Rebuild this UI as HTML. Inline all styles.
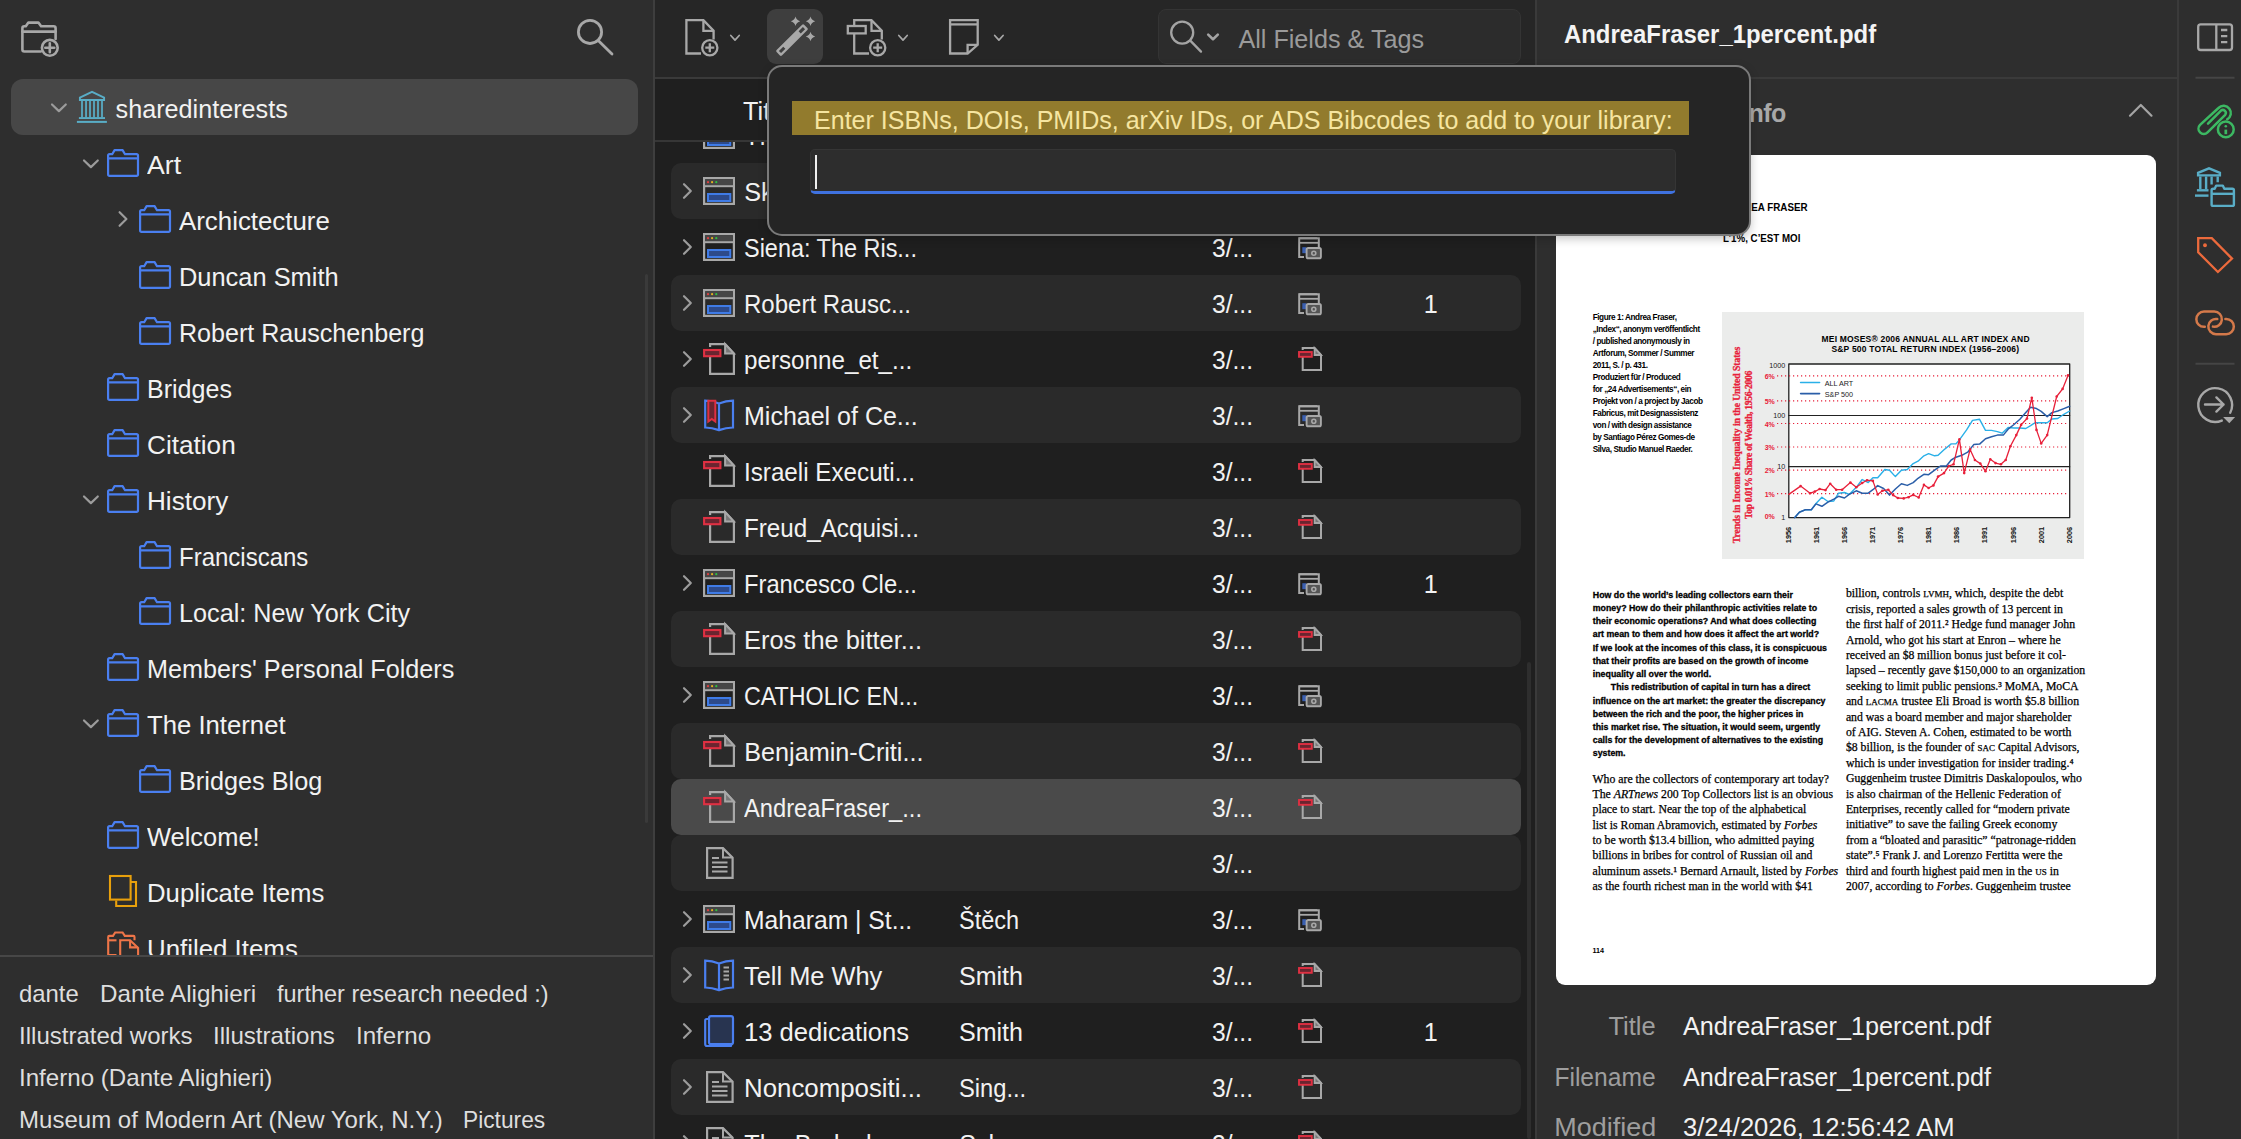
<!DOCTYPE html>
<html><head><meta charset="utf-8"><style>
html,body{margin:0;padding:0;width:2241px;height:1139px;overflow:hidden;background:#1f1f1f;}
body>div,body>svg{position:absolute;}
.t{position:absolute;white-space:nowrap;font-family:'Liberation Sans', sans-serif;}
</style></head><body>
<div style="left:0px;top:0px;width:654px;height:1139px;background:#2e2e2e;border-radius:0px;"></div>
<div style="left:653px;top:0px;width:2px;height:1139px;background:#3e3e3e;border-radius:0px;"></div>
<div style="left:655px;top:0px;width:881px;height:78px;background:#262626;border-radius:0px;"></div>
<div style="left:655px;top:78px;width:881px;height:1061px;background:#1f1f1f;border-radius:0px;"></div>
<div style="left:1537px;top:0px;width:704px;height:1139px;background:#2e2e2e;border-radius:0px;"></div>
<svg style="left:15px;top:15px;" width="50" height="50" viewBox="15 15 50 50" fill="none" stroke-linecap="round" stroke-linejoin="round"><g stroke="#a8a8a8" stroke-width="2.6"><path d="M40.8,51.5 H24.4 Q22.4,51.5 22.4,49.5 V28.3 Q22.4,26.3 24.4,26.3 H25.8 L28.4,22.6 H38.4 L41.1,26.3 H53.6 Q55.6,26.3 55.6,28.3 V39"/><path d="M22.4,31.6 H55.6"/><circle cx="49.8" cy="47.8" r="7.9" fill="#2e2e2e"/><path d="M45.3,47.8 H54.3 M49.8,43.3 V52.3"/></g></svg>
<svg style="left:570px;top:10px;" width="50" height="50" viewBox="570 10 50 50" fill="none" stroke-linecap="round" stroke-linejoin="round"><g stroke="#a8a8a8" stroke-width="2.8"><circle cx="590" cy="31.9" r="11.6"/><path d="M599,41.2 L612,54"/></g></svg>
<div style="left:11px;top:79px;width:627px;height:56px;background:#474747;border-radius:12px;"></div>
<div class="t" style="left:115.6px;top:96.9px;font-size:25.2px;line-height:25.2px;color:#f2f2f2;">sharedinterests</div>
<div class="t" style="left:147.1px;top:152.9px;font-size:25.2px;line-height:25.2px;color:#f2f2f2;transform:scaleX(1.0594);transform-origin:left center;">Art</div>
<div class="t" style="left:179.1px;top:208.9px;font-size:25.2px;line-height:25.2px;color:#f2f2f2;transform:scaleX(1.0260);transform-origin:left center;">Archictecture</div>
<div class="t" style="left:179.1px;top:264.9px;font-size:25.2px;line-height:25.2px;color:#f2f2f2;transform:scaleX(1.0088);transform-origin:left center;">Duncan Smith</div>
<div class="t" style="left:179.1px;top:320.9px;font-size:25.2px;line-height:25.2px;color:#f2f2f2;transform:scaleX(0.9958);transform-origin:left center;">Robert Rauschenberg</div>
<div class="t" style="left:147.1px;top:376.9px;font-size:25.2px;line-height:25.2px;color:#f2f2f2;transform:scaleX(0.9941);transform-origin:left center;">Bridges</div>
<div class="t" style="left:147.1px;top:432.9px;font-size:25.2px;line-height:25.2px;color:#f2f2f2;transform:scaleX(1.0386);transform-origin:left center;">Citation</div>
<div class="t" style="left:147.1px;top:488.9px;font-size:25.2px;line-height:25.2px;color:#f2f2f2;transform:scaleX(1.0373);transform-origin:left center;">History</div>
<div class="t" style="left:179.1px;top:544.9px;font-size:25.2px;line-height:25.2px;color:#f2f2f2;transform:scaleX(0.9523);transform-origin:left center;">Franciscans</div>
<div class="t" style="left:179.1px;top:600.9px;font-size:25.2px;line-height:25.2px;color:#f2f2f2;">Local: New York City</div>
<div class="t" style="left:147.1px;top:656.9px;font-size:25.2px;line-height:25.2px;color:#f2f2f2;">Members' Personal Folders</div>
<div class="t" style="left:147.1px;top:712.9px;font-size:25.2px;line-height:25.2px;color:#f2f2f2;transform:scaleX(1.0204);transform-origin:left center;">The Internet</div>
<div class="t" style="left:179.1px;top:768.9px;font-size:25.2px;line-height:25.2px;color:#f2f2f2;transform:scaleX(1.0034);transform-origin:left center;">Bridges Blog</div>
<div class="t" style="left:147.1px;top:824.9px;font-size:25.2px;line-height:25.2px;color:#f2f2f2;transform:scaleX(1.0097);transform-origin:left center;">Welcome!</div>
<div class="t" style="left:147.1px;top:880.9px;font-size:25.2px;line-height:25.2px;color:#f2f2f2;transform:scaleX(1.0219);transform-origin:left center;">Duplicate Items</div>
<div class="t" style="left:147.1px;top:936.9px;font-size:25.2px;line-height:25.2px;color:#f2f2f2;transform:scaleX(1.0260);transform-origin:left center;">Unfiled Items</div>
<svg style="left:0px;top:79px;" width="653" height="876" viewBox="0 79 653 876" fill="none" stroke-linecap="round" stroke-linejoin="round"><path d="M52.00000000000001,104.5 L58.900000000000006,111.1 L65.80000000000001,104.5" stroke="#9c9c9c" stroke-width="2.2"/><g stroke="#59adc6" stroke-linecap="butt" stroke-linejoin="miter"><path d="M79.9,100 V97.6 L92,91.9 L104.1,97.6 V100 Z" stroke-width="1.9"/><path d="M82,100.5 V117.5 M86.05,100.5 V117.5 M90,100.5 V117.5 M94,100.5 V117.5 M98,100.5 V117.5 M102,100.5 V117.5" stroke-width="1.75"/><path d="M78.9,118.05 H105" stroke-width="1.9"/><path d="M76.9,121.9 H106.9" stroke-width="2"/></g><path d="M84.0,160.5 L90.9,167.1 L97.80000000000001,160.5" stroke="#9c9c9c" stroke-width="2.2"/><g stroke="#4a7ff0" stroke-width="2.2" transform="translate(107,149)"><path d="M2.6,26.9 H29.4 Q31,26.9 31,25.3 V6.6 Q31,5.2 29.4,5.2 H18 L15.6,1.1 H7.6 L5.2,5.2 H2.6 Q1.1,5.2 1.1,6.6 V25.3 Q1.1,26.9 2.6,26.9 Z"/><path d="M1.1,9.4 H31"/></g><path d="M119.6,212.2 L126.39999999999999,219 L119.6,225.8" stroke="#9c9c9c" stroke-width="2.2"/><g stroke="#4a7ff0" stroke-width="2.2" transform="translate(139,205)"><path d="M2.6,26.9 H29.4 Q31,26.9 31,25.3 V6.6 Q31,5.2 29.4,5.2 H18 L15.6,1.1 H7.6 L5.2,5.2 H2.6 Q1.1,5.2 1.1,6.6 V25.3 Q1.1,26.9 2.6,26.9 Z"/><path d="M1.1,9.4 H31"/></g><g stroke="#4a7ff0" stroke-width="2.2" transform="translate(139,261)"><path d="M2.6,26.9 H29.4 Q31,26.9 31,25.3 V6.6 Q31,5.2 29.4,5.2 H18 L15.6,1.1 H7.6 L5.2,5.2 H2.6 Q1.1,5.2 1.1,6.6 V25.3 Q1.1,26.9 2.6,26.9 Z"/><path d="M1.1,9.4 H31"/></g><g stroke="#4a7ff0" stroke-width="2.2" transform="translate(139,317)"><path d="M2.6,26.9 H29.4 Q31,26.9 31,25.3 V6.6 Q31,5.2 29.4,5.2 H18 L15.6,1.1 H7.6 L5.2,5.2 H2.6 Q1.1,5.2 1.1,6.6 V25.3 Q1.1,26.9 2.6,26.9 Z"/><path d="M1.1,9.4 H31"/></g><g stroke="#4a7ff0" stroke-width="2.2" transform="translate(107,373)"><path d="M2.6,26.9 H29.4 Q31,26.9 31,25.3 V6.6 Q31,5.2 29.4,5.2 H18 L15.6,1.1 H7.6 L5.2,5.2 H2.6 Q1.1,5.2 1.1,6.6 V25.3 Q1.1,26.9 2.6,26.9 Z"/><path d="M1.1,9.4 H31"/></g><g stroke="#4a7ff0" stroke-width="2.2" transform="translate(107,429)"><path d="M2.6,26.9 H29.4 Q31,26.9 31,25.3 V6.6 Q31,5.2 29.4,5.2 H18 L15.6,1.1 H7.6 L5.2,5.2 H2.6 Q1.1,5.2 1.1,6.6 V25.3 Q1.1,26.9 2.6,26.9 Z"/><path d="M1.1,9.4 H31"/></g><path d="M84.0,496.5 L90.9,503.1 L97.80000000000001,496.5" stroke="#9c9c9c" stroke-width="2.2"/><g stroke="#4a7ff0" stroke-width="2.2" transform="translate(107,485)"><path d="M2.6,26.9 H29.4 Q31,26.9 31,25.3 V6.6 Q31,5.2 29.4,5.2 H18 L15.6,1.1 H7.6 L5.2,5.2 H2.6 Q1.1,5.2 1.1,6.6 V25.3 Q1.1,26.9 2.6,26.9 Z"/><path d="M1.1,9.4 H31"/></g><g stroke="#4a7ff0" stroke-width="2.2" transform="translate(139,541)"><path d="M2.6,26.9 H29.4 Q31,26.9 31,25.3 V6.6 Q31,5.2 29.4,5.2 H18 L15.6,1.1 H7.6 L5.2,5.2 H2.6 Q1.1,5.2 1.1,6.6 V25.3 Q1.1,26.9 2.6,26.9 Z"/><path d="M1.1,9.4 H31"/></g><g stroke="#4a7ff0" stroke-width="2.2" transform="translate(139,597)"><path d="M2.6,26.9 H29.4 Q31,26.9 31,25.3 V6.6 Q31,5.2 29.4,5.2 H18 L15.6,1.1 H7.6 L5.2,5.2 H2.6 Q1.1,5.2 1.1,6.6 V25.3 Q1.1,26.9 2.6,26.9 Z"/><path d="M1.1,9.4 H31"/></g><g stroke="#4a7ff0" stroke-width="2.2" transform="translate(107,653)"><path d="M2.6,26.9 H29.4 Q31,26.9 31,25.3 V6.6 Q31,5.2 29.4,5.2 H18 L15.6,1.1 H7.6 L5.2,5.2 H2.6 Q1.1,5.2 1.1,6.6 V25.3 Q1.1,26.9 2.6,26.9 Z"/><path d="M1.1,9.4 H31"/></g><path d="M84.0,720.5 L90.9,727.1 L97.80000000000001,720.5" stroke="#9c9c9c" stroke-width="2.2"/><g stroke="#4a7ff0" stroke-width="2.2" transform="translate(107,709)"><path d="M2.6,26.9 H29.4 Q31,26.9 31,25.3 V6.6 Q31,5.2 29.4,5.2 H18 L15.6,1.1 H7.6 L5.2,5.2 H2.6 Q1.1,5.2 1.1,6.6 V25.3 Q1.1,26.9 2.6,26.9 Z"/><path d="M1.1,9.4 H31"/></g><g stroke="#4a7ff0" stroke-width="2.2" transform="translate(139,765)"><path d="M2.6,26.9 H29.4 Q31,26.9 31,25.3 V6.6 Q31,5.2 29.4,5.2 H18 L15.6,1.1 H7.6 L5.2,5.2 H2.6 Q1.1,5.2 1.1,6.6 V25.3 Q1.1,26.9 2.6,26.9 Z"/><path d="M1.1,9.4 H31"/></g><g stroke="#4a7ff0" stroke-width="2.2" transform="translate(107,821)"><path d="M2.6,26.9 H29.4 Q31,26.9 31,25.3 V6.6 Q31,5.2 29.4,5.2 H18 L15.6,1.1 H7.6 L5.2,5.2 H2.6 Q1.1,5.2 1.1,6.6 V25.3 Q1.1,26.9 2.6,26.9 Z"/><path d="M1.1,9.4 H31"/></g><g stroke="#e8a00c" stroke-width="2.1" stroke-linecap="butt" stroke-linejoin="miter"><rect x="110" y="876" width="20.6" height="23.6"/><path d="M130.6,882 H136 V906 H116.2 V900.5"/></g><g stroke="#ee7548" stroke-width="2.1" stroke-linecap="butt" stroke-linejoin="miter"><path d="M116.5,955 H108.2 V937 Q108.2,935.9 109.3,935.9 H113 L115.2,932.5 H122.6 L124.8,935.9 H133.4 Q134.5,935.9 134.5,937 V940.3"/><path d="M108.2,940.3 H116.5"/><path d="M120.2,956 V940.3 H130.1 L138.1,948 V956"/><path d="M130.1,940.3 V947.4 H138.1"/></g></svg>
<div style="left:0px;top:955px;width:653px;height:184px;background:#2e2e2e;border-radius:0px;"></div>
<div style="left:0px;top:955px;width:653px;height:2px;background:#474747;border-radius:0px;"></div>
<div style="left:644.5px;top:274px;width:3px;height:549px;background:#3a3a3a;border-radius:2px;"></div>
<div class="t" style="left:19.1px;top:981.6px;font-size:24px;line-height:24px;color:#dedede;transform:scaleX(0.9956);transform-origin:left center;">dante</div>
<div class="t" style="left:99.6px;top:981.6px;font-size:24px;line-height:24px;color:#dedede;transform:scaleX(1.0086);transform-origin:left center;">Dante Alighieri</div>
<div class="t" style="left:276.9px;top:981.6px;font-size:24px;line-height:24px;color:#dedede;transform:scaleX(0.9787);transform-origin:left center;">further research needed :)</div>
<div class="t" style="left:19.1px;top:1023.5px;font-size:24px;line-height:24px;color:#dedede;">Illustrated works</div>
<div class="t" style="left:213px;top:1023.5px;font-size:24px;line-height:24px;color:#dedede;transform:scaleX(1.0042);transform-origin:left center;">Illustrations</div>
<div class="t" style="left:355.5px;top:1023.5px;font-size:24px;line-height:24px;color:#dedede;transform:scaleX(1.0051);transform-origin:left center;">Inferno</div>
<div class="t" style="left:19.1px;top:1065.5px;font-size:24px;line-height:24px;color:#dedede;transform:scaleX(1.0050);transform-origin:left center;">Inferno (Dante Alighieri)</div>
<div class="t" style="left:19.1px;top:1107.9px;font-size:24px;line-height:24px;color:#dedede;">Museum of Modern Art (New York, N.Y.)</div>
<div class="t" style="left:463.3px;top:1107.9px;font-size:24px;line-height:24px;color:#dedede;transform:scaleX(0.9481);transform-origin:left center;">Pictures</div>
<div style="left:655px;top:77px;width:881px;height:2px;background:#3a3a3a;border-radius:0px;"></div>
<svg style="left:655px;top:0px;" width="500" height="77" viewBox="655 0 500 77" fill="none" stroke-linecap="round" stroke-linejoin="round"><g stroke="#a8a8a8" stroke-width="2.3" stroke-linecap="butt" stroke-linejoin="miter"><path d="M701,53.5 H686.4 V20.1 H703.4 L713.6,30.8 V39.5"/><path d="M703.4,20.1 V30.8 H713.6"/><circle cx="709.8" cy="47.7" r="7.6" fill="#262626"/><path d="M705.3,47.7 H714.3 M709.8,43.2 V52.2"/></g><path d="M730.8,35.5 L735.0,40.1 L739.1999999999999,35.5" stroke="#a8a8a8" stroke-width="1.7"/><path d="M898.8,35.5 L903.0,40.1 L907.1999999999999,35.5" stroke="#a8a8a8" stroke-width="1.7"/><path d="M994.7,35.5 L998.9000000000001,40.1 L1003.1,35.5" stroke="#a8a8a8" stroke-width="1.7"/><g stroke="#a8a8a8" stroke-width="2.3" stroke-linecap="butt" stroke-linejoin="miter"><path d="M869,53.5 H854.2 V33.5 M854.2,25.9 V20.1 H871.5 L881.8,30.8 V39.5"/><path d="M871.5,20.1 V30.8 H881.8"/><rect x="847.8" y="26" width="17.9" height="7.4"/><circle cx="877.7" cy="47.7" r="7.6" fill="#262626"/><path d="M873.2,47.7 H882.2 M877.7,43.2 V52.2"/></g><g stroke="#a8a8a8" stroke-width="2.3" stroke-linecap="butt" stroke-linejoin="miter"><path d="M967.6,53.5 H950.1 V20.1 H977.7 V44.8 Z"/><path d="M950.1,24.4 H977.7"/><path d="M967.6,53.5 V44.8 H977.7"/></g></svg>
<div style="left:767px;top:9px;width:56px;height:55px;background:#3e3e3e;border-radius:9px;"></div>
<svg style="left:767px;top:9px;" width="56" height="55" viewBox="767 9 56 55" fill="none" stroke-linecap="round" stroke-linejoin="round"><g><path d="M777.6,51.1 L780.9,54.4 L806.4,29 L803.1,25.7 Z" fill="#a8a8a8" stroke="#a8a8a8" stroke-width="2.8" stroke-linejoin="round"/><path d="M780,52 L784.3,47.7 M799.7,32.4 L804,28.1" stroke="#3e3e3e" stroke-width="3" stroke-linecap="butt"/><path d="M795.5,16.6 Q796.44,20.36 800.2,21.3 Q796.44,22.240000000000002 795.5,26.0 Q794.56,22.240000000000002 790.8,21.3 Q794.56,20.36 795.5,16.6 Z" fill="#a8a8a8" stroke="none"/><path d="M810.5,16.6 Q811.44,20.36 815.2,21.3 Q811.44,22.240000000000002 810.5,26.0 Q809.56,22.240000000000002 805.8,21.3 Q809.56,20.36 810.5,16.6 Z" fill="#a8a8a8" stroke="none"/><path d="M810.5,31.8 Q811.44,35.56 815.2,36.5 Q811.44,37.44 810.5,41.2 Q809.56,37.44 805.8,36.5 Q809.56,35.56 810.5,31.8 Z" fill="#a8a8a8" stroke="none"/></g></svg>
<div style="left:1158px;top:9px;width:363px;height:55px;background:#2c2c2c;border-radius:8px;box-sizing:border-box;border:1px solid #343434;"></div>
<svg style="left:1160px;top:10px;" width="70" height="50" viewBox="1160 10 70 50" fill="none" stroke-linecap="round" stroke-linejoin="round"><g stroke="#a4a4a4" stroke-width="2.3"><circle cx="1182.2" cy="32.6" r="11"/><path d="M1190.3,40.6 L1201,51.6"/><path d="M1208.2,34.6 L1213,39.2 L1217.8,34.6" stroke-width="2.6"/></g></svg>
<div class="t" style="left:1238.4px;top:26.9px;font-size:25.2px;line-height:25.2px;color:#9a9a9a;">All Fields &amp; Tags</div>
<div class="t" style="left:744.3px;top:124.3px;font-size:25.2px;line-height:25.2px;color:#f2f2f2;">The Bodleian...</div>
<div class="t" style="left:1211.5px;top:124.3px;font-size:25.2px;line-height:25.2px;color:#f2f2f2;transform:scaleX(0.9762);transform-origin:left center;">3/...</div>
<div style="left:671px;top:163px;width:850px;height:56px;background:#2a2a2a;border-radius:10px;"></div>
<div class="t" style="left:744.3px;top:180.3px;font-size:25.2px;line-height:25.2px;color:#f2f2f2;">Skira...</div>
<div class="t" style="left:1211.5px;top:180.3px;font-size:25.2px;line-height:25.2px;color:#f2f2f2;transform:scaleX(0.9762);transform-origin:left center;">3/...</div>
<div class="t" style="left:744.3px;top:236.3px;font-size:25.2px;line-height:25.2px;color:#f2f2f2;transform:scaleX(0.9309);transform-origin:left center;">Siena: The Ris...</div>
<div class="t" style="left:1211.5px;top:236.3px;font-size:25.2px;line-height:25.2px;color:#f2f2f2;transform:scaleX(0.9762);transform-origin:left center;">3/...</div>
<div style="left:671px;top:275px;width:850px;height:56px;background:#2a2a2a;border-radius:10px;"></div>
<div class="t" style="left:744.3px;top:292.3px;font-size:25.2px;line-height:25.2px;color:#f2f2f2;transform:scaleX(0.9544);transform-origin:left center;">Robert Rausc...</div>
<div class="t" style="left:1211.5px;top:292.3px;font-size:25.2px;line-height:25.2px;color:#f2f2f2;transform:scaleX(0.9762);transform-origin:left center;">3/...</div>
<div class="t" style="left:1423.8px;top:292.3px;font-size:25.2px;line-height:25.2px;color:#f2f2f2;">1</div>
<div class="t" style="left:744.3px;top:348.3px;font-size:25.2px;line-height:25.2px;color:#f2f2f2;transform:scaleX(0.9609);transform-origin:left center;">personne_et_...</div>
<div class="t" style="left:1211.5px;top:348.3px;font-size:25.2px;line-height:25.2px;color:#f2f2f2;transform:scaleX(0.9762);transform-origin:left center;">3/...</div>
<div style="left:671px;top:387px;width:850px;height:56px;background:#2a2a2a;border-radius:10px;"></div>
<div class="t" style="left:744.3px;top:404.3px;font-size:25.2px;line-height:25.2px;color:#f2f2f2;transform:scaleX(0.9927);transform-origin:left center;">Michael of Ce...</div>
<div class="t" style="left:1211.5px;top:404.3px;font-size:25.2px;line-height:25.2px;color:#f2f2f2;transform:scaleX(0.9762);transform-origin:left center;">3/...</div>
<div class="t" style="left:744.3px;top:460.3px;font-size:25.2px;line-height:25.2px;color:#f2f2f2;transform:scaleX(0.9613);transform-origin:left center;">Israeli Executi...</div>
<div class="t" style="left:1211.5px;top:460.3px;font-size:25.2px;line-height:25.2px;color:#f2f2f2;transform:scaleX(0.9762);transform-origin:left center;">3/...</div>
<div style="left:671px;top:499px;width:850px;height:56px;background:#2a2a2a;border-radius:10px;"></div>
<div class="t" style="left:744.3px;top:516.3px;font-size:25.2px;line-height:25.2px;color:#f2f2f2;transform:scaleX(0.9610);transform-origin:left center;">Freud_Acquisi...</div>
<div class="t" style="left:1211.5px;top:516.3px;font-size:25.2px;line-height:25.2px;color:#f2f2f2;transform:scaleX(0.9762);transform-origin:left center;">3/...</div>
<div class="t" style="left:744.3px;top:572.3px;font-size:25.2px;line-height:25.2px;color:#f2f2f2;transform:scaleX(0.9429);transform-origin:left center;">Francesco Cle...</div>
<div class="t" style="left:1211.5px;top:572.3px;font-size:25.2px;line-height:25.2px;color:#f2f2f2;transform:scaleX(0.9762);transform-origin:left center;">3/...</div>
<div class="t" style="left:1423.8px;top:572.3px;font-size:25.2px;line-height:25.2px;color:#f2f2f2;">1</div>
<div style="left:671px;top:611px;width:850px;height:56px;background:#2a2a2a;border-radius:10px;"></div>
<div class="t" style="left:744.3px;top:628.3px;font-size:25.2px;line-height:25.2px;color:#f2f2f2;transform:scaleX(1.0090);transform-origin:left center;">Eros the bitter...</div>
<div class="t" style="left:1211.5px;top:628.3px;font-size:25.2px;line-height:25.2px;color:#f2f2f2;transform:scaleX(0.9762);transform-origin:left center;">3/...</div>
<div class="t" style="left:744.3px;top:684.3px;font-size:25.2px;line-height:25.2px;color:#f2f2f2;transform:scaleX(0.9238);transform-origin:left center;">CATHOLIC EN...</div>
<div class="t" style="left:1211.5px;top:684.3px;font-size:25.2px;line-height:25.2px;color:#f2f2f2;transform:scaleX(0.9762);transform-origin:left center;">3/...</div>
<div style="left:671px;top:723px;width:850px;height:56px;background:#2a2a2a;border-radius:10px;"></div>
<div class="t" style="left:744.3px;top:740.3px;font-size:25.2px;line-height:25.2px;color:#f2f2f2;">Benjamin-Criti...</div>
<div class="t" style="left:1211.5px;top:740.3px;font-size:25.2px;line-height:25.2px;color:#f2f2f2;transform:scaleX(0.9762);transform-origin:left center;">3/...</div>
<div style="left:671px;top:779px;width:850px;height:56px;background:#4a4a4a;border-radius:10px;"></div>
<div class="t" style="left:744.3px;top:796.3px;font-size:25.2px;line-height:25.2px;color:#f2f2f2;transform:scaleX(0.9418);transform-origin:left center;">AndreaFraser_...</div>
<div class="t" style="left:1211.5px;top:796.3px;font-size:25.2px;line-height:25.2px;color:#f2f2f2;transform:scaleX(0.9762);transform-origin:left center;">3/...</div>
<div style="left:671px;top:835px;width:850px;height:56px;background:#2a2a2a;border-radius:10px;"></div>
<div class="t" style="left:1211.5px;top:852.3px;font-size:25.2px;line-height:25.2px;color:#f2f2f2;transform:scaleX(0.9762);transform-origin:left center;">3/...</div>
<div class="t" style="left:744.3px;top:908.3px;font-size:25.2px;line-height:25.2px;color:#f2f2f2;transform:scaleX(0.9795);transform-origin:left center;">Maharam | St...</div>
<div class="t" style="left:959.2px;top:908.3px;font-size:25.2px;line-height:25.2px;color:#f2f2f2;transform:scaleX(0.9329);transform-origin:left center;">&#352;t&#283;ch</div>
<div class="t" style="left:1211.5px;top:908.3px;font-size:25.2px;line-height:25.2px;color:#f2f2f2;transform:scaleX(0.9762);transform-origin:left center;">3/...</div>
<div style="left:671px;top:947px;width:850px;height:56px;background:#2a2a2a;border-radius:10px;"></div>
<div class="t" style="left:744.3px;top:964.3px;font-size:25.2px;line-height:25.2px;color:#f2f2f2;transform:scaleX(1.0083);transform-origin:left center;">Tell Me Why</div>
<div class="t" style="left:959.2px;top:964.3px;font-size:25.2px;line-height:25.2px;color:#f2f2f2;transform:scaleX(0.9939);transform-origin:left center;">Smith</div>
<div class="t" style="left:1211.5px;top:964.3px;font-size:25.2px;line-height:25.2px;color:#f2f2f2;transform:scaleX(0.9762);transform-origin:left center;">3/...</div>
<div class="t" style="left:744.3px;top:1020.3px;font-size:25.2px;line-height:25.2px;color:#f2f2f2;transform:scaleX(1.0163);transform-origin:left center;">13 dedications</div>
<div class="t" style="left:959.2px;top:1020.3px;font-size:25.2px;line-height:25.2px;color:#f2f2f2;transform:scaleX(0.9939);transform-origin:left center;">Smith</div>
<div class="t" style="left:1211.5px;top:1020.3px;font-size:25.2px;line-height:25.2px;color:#f2f2f2;transform:scaleX(0.9762);transform-origin:left center;">3/...</div>
<div class="t" style="left:1423.8px;top:1020.3px;font-size:25.2px;line-height:25.2px;color:#f2f2f2;">1</div>
<div style="left:671px;top:1059px;width:850px;height:56px;background:#2a2a2a;border-radius:10px;"></div>
<div class="t" style="left:744.3px;top:1076.3px;font-size:25.2px;line-height:25.2px;color:#f2f2f2;transform:scaleX(1.0254);transform-origin:left center;">Noncompositi...</div>
<div class="t" style="left:959.2px;top:1076.3px;font-size:25.2px;line-height:25.2px;color:#f2f2f2;transform:scaleX(0.9411);transform-origin:left center;">Sing...</div>
<div class="t" style="left:1211.5px;top:1076.3px;font-size:25.2px;line-height:25.2px;color:#f2f2f2;transform:scaleX(0.9762);transform-origin:left center;">3/...</div>
<div class="t" style="left:744.3px;top:1132.3px;font-size:25.2px;line-height:25.2px;color:#f2f2f2;">The Bodyoka...</div>
<div class="t" style="left:959.2px;top:1132.3px;font-size:25.2px;line-height:25.2px;color:#f2f2f2;">Sch...</div>
<div class="t" style="left:1211.5px;top:1132.3px;font-size:25.2px;line-height:25.2px;color:#f2f2f2;transform:scaleX(0.9762);transform-origin:left center;">3/...</div>
<svg style="left:655px;top:79px;" width="881" height="1060" viewBox="655 79 881 1060" fill="none" stroke-linecap="round" stroke-linejoin="round"><g transform="translate(703,121)" stroke-linecap="butt" stroke-linejoin="miter"><rect x="1.1" y="1.1" width="29.8" height="25.8" stroke="#a8a8a8" stroke-width="2.2"/><rect x="2.2" y="2.2" width="27.6" height="6.4" fill="#464646"/><path d="M1.1,9.2 H30.9" stroke="#a8a8a8" stroke-width="2"/><circle cx="5" cy="5.2" r="1.1" fill="#e04040"/><circle cx="9.1" cy="5.2" r="1.1" fill="#e0b020"/><circle cx="13.3" cy="5.2" r="1.1" fill="#30c040"/><rect x="5" y="17" width="22.3" height="7" fill="#2d4a8a" stroke="#3f7be6" stroke-width="2"/></g><g transform="translate(1298,125)" stroke-linecap="butt" stroke-linejoin="miter"><path d="M19.2,1.2 H1.2 V20 H6" stroke="#a8a8a8" stroke-width="2"/><path d="M1.2,1.2 H20.8 V12" stroke="#a8a8a8" stroke-width="2"/><path d="M1.2,5.8 H20.8" stroke="#a8a8a8" stroke-width="1.8"/><rect x="4.3" y="10.2" width="4" height="6" fill="#3a5fb0"/><rect x="8.6" y="11" width="14.3" height="10.3" rx="1.6" fill="#555" stroke="#a8a8a8" stroke-width="1.9"/><circle cx="15.8" cy="16.2" r="2" stroke="#a8a8a8" stroke-width="1.6"/></g><path d="M684,184.2 L690.8,191 L684,197.8" stroke="#9c9c9c" stroke-width="2.2"/><g transform="translate(703,177)" stroke-linecap="butt" stroke-linejoin="miter"><rect x="1.1" y="1.1" width="29.8" height="25.8" stroke="#a8a8a8" stroke-width="2.2"/><rect x="2.2" y="2.2" width="27.6" height="6.4" fill="#464646"/><path d="M1.1,9.2 H30.9" stroke="#a8a8a8" stroke-width="2"/><circle cx="5" cy="5.2" r="1.1" fill="#e04040"/><circle cx="9.1" cy="5.2" r="1.1" fill="#e0b020"/><circle cx="13.3" cy="5.2" r="1.1" fill="#30c040"/><rect x="5" y="17" width="22.3" height="7" fill="#2d4a8a" stroke="#3f7be6" stroke-width="2"/></g><g transform="translate(1298,181)" stroke-linecap="butt" stroke-linejoin="miter"><path d="M19.2,1.2 H1.2 V20 H6" stroke="#a8a8a8" stroke-width="2"/><path d="M1.2,1.2 H20.8 V12" stroke="#a8a8a8" stroke-width="2"/><path d="M1.2,5.8 H20.8" stroke="#a8a8a8" stroke-width="1.8"/><rect x="4.3" y="10.2" width="4" height="6" fill="#3a5fb0"/><rect x="8.6" y="11" width="14.3" height="10.3" rx="1.6" fill="#555" stroke="#a8a8a8" stroke-width="1.9"/><circle cx="15.8" cy="16.2" r="2" stroke="#a8a8a8" stroke-width="1.6"/></g><path d="M684,240.2 L690.8,247 L684,253.8" stroke="#9c9c9c" stroke-width="2.2"/><g transform="translate(703,233)" stroke-linecap="butt" stroke-linejoin="miter"><rect x="1.1" y="1.1" width="29.8" height="25.8" stroke="#a8a8a8" stroke-width="2.2"/><rect x="2.2" y="2.2" width="27.6" height="6.4" fill="#464646"/><path d="M1.1,9.2 H30.9" stroke="#a8a8a8" stroke-width="2"/><circle cx="5" cy="5.2" r="1.1" fill="#e04040"/><circle cx="9.1" cy="5.2" r="1.1" fill="#e0b020"/><circle cx="13.3" cy="5.2" r="1.1" fill="#30c040"/><rect x="5" y="17" width="22.3" height="7" fill="#2d4a8a" stroke="#3f7be6" stroke-width="2"/></g><g transform="translate(1298,237)" stroke-linecap="butt" stroke-linejoin="miter"><path d="M19.2,1.2 H1.2 V20 H6" stroke="#a8a8a8" stroke-width="2"/><path d="M1.2,1.2 H20.8 V12" stroke="#a8a8a8" stroke-width="2"/><path d="M1.2,5.8 H20.8" stroke="#a8a8a8" stroke-width="1.8"/><rect x="4.3" y="10.2" width="4" height="6" fill="#3a5fb0"/><rect x="8.6" y="11" width="14.3" height="10.3" rx="1.6" fill="#555" stroke="#a8a8a8" stroke-width="1.9"/><circle cx="15.8" cy="16.2" r="2" stroke="#a8a8a8" stroke-width="1.6"/></g><path d="M684,296.2 L690.8,303 L684,309.8" stroke="#9c9c9c" stroke-width="2.2"/><g transform="translate(703,289)" stroke-linecap="butt" stroke-linejoin="miter"><rect x="1.1" y="1.1" width="29.8" height="25.8" stroke="#a8a8a8" stroke-width="2.2"/><rect x="2.2" y="2.2" width="27.6" height="6.4" fill="#464646"/><path d="M1.1,9.2 H30.9" stroke="#a8a8a8" stroke-width="2"/><circle cx="5" cy="5.2" r="1.1" fill="#e04040"/><circle cx="9.1" cy="5.2" r="1.1" fill="#e0b020"/><circle cx="13.3" cy="5.2" r="1.1" fill="#30c040"/><rect x="5" y="17" width="22.3" height="7" fill="#2d4a8a" stroke="#3f7be6" stroke-width="2"/></g><g transform="translate(1298,293)" stroke-linecap="butt" stroke-linejoin="miter"><path d="M19.2,1.2 H1.2 V20 H6" stroke="#a8a8a8" stroke-width="2"/><path d="M1.2,1.2 H20.8 V12" stroke="#a8a8a8" stroke-width="2"/><path d="M1.2,5.8 H20.8" stroke="#a8a8a8" stroke-width="1.8"/><rect x="4.3" y="10.2" width="4" height="6" fill="#3a5fb0"/><rect x="8.6" y="11" width="14.3" height="10.3" rx="1.6" fill="#555" stroke="#a8a8a8" stroke-width="1.9"/><circle cx="15.8" cy="16.2" r="2" stroke="#a8a8a8" stroke-width="1.6"/></g><path d="M684,352.2 L690.8,359 L684,365.8" stroke="#9c9c9c" stroke-width="2.2"/><g transform="translate(703,343)" stroke-linecap="butt" stroke-linejoin="miter"><path d="M7.1,6 V30.9 H30.9 V10.6 L22.1,1.1 H7.1 V4" stroke="#a8a8a8" stroke-width="2.2"/><path d="M22.1,1.1 V10.6 H30.9 Z" fill="#777" stroke="#a8a8a8" stroke-width="2"/><rect x="1.1" y="7" width="16.3" height="6.2" fill="#6a2530" stroke="#df3042" stroke-width="2.1"/></g><g transform="translate(1298,347)" stroke-linecap="butt" stroke-linejoin="miter"><path d="M4.7,5.5 V23 H23 V8 L16.6,1.1 H4.7 V3" stroke="#a8a8a8" stroke-width="2"/><path d="M16.6,1.1 V8 H23 Z" fill="#777" stroke="#a8a8a8" stroke-width="1.8"/><rect x="1" y="5" width="12.8" height="4.8" fill="#6a2530" stroke="#df3042" stroke-width="1.9"/></g><path d="M684,408.2 L690.8,415 L684,421.8" stroke="#9c9c9c" stroke-width="2.2"/><g transform="translate(704,399.5)" stroke-linejoin="miter" stroke-linecap="butt"><path d="M15,4 Q8,1.2 1.2,1.2 V28 Q8,28 15,30.6 Q22,28 29,28 V1.2 Q22,1.2 15,4 Z M15,4 V30.6" stroke="#4a7ff0" stroke-width="2.2"/><path d="M4.3,1.2 H11.3 V22 L7.8,19.4 L4.3,22 Z" fill="#6a2530" stroke="#df3042" stroke-width="2"/></g><g transform="translate(1298,405)" stroke-linecap="butt" stroke-linejoin="miter"><path d="M19.2,1.2 H1.2 V20 H6" stroke="#a8a8a8" stroke-width="2"/><path d="M1.2,1.2 H20.8 V12" stroke="#a8a8a8" stroke-width="2"/><path d="M1.2,5.8 H20.8" stroke="#a8a8a8" stroke-width="1.8"/><rect x="4.3" y="10.2" width="4" height="6" fill="#3a5fb0"/><rect x="8.6" y="11" width="14.3" height="10.3" rx="1.6" fill="#555" stroke="#a8a8a8" stroke-width="1.9"/><circle cx="15.8" cy="16.2" r="2" stroke="#a8a8a8" stroke-width="1.6"/></g><g transform="translate(703,455)" stroke-linecap="butt" stroke-linejoin="miter"><path d="M7.1,6 V30.9 H30.9 V10.6 L22.1,1.1 H7.1 V4" stroke="#a8a8a8" stroke-width="2.2"/><path d="M22.1,1.1 V10.6 H30.9 Z" fill="#777" stroke="#a8a8a8" stroke-width="2"/><rect x="1.1" y="7" width="16.3" height="6.2" fill="#6a2530" stroke="#df3042" stroke-width="2.1"/></g><g transform="translate(1298,459)" stroke-linecap="butt" stroke-linejoin="miter"><path d="M4.7,5.5 V23 H23 V8 L16.6,1.1 H4.7 V3" stroke="#a8a8a8" stroke-width="2"/><path d="M16.6,1.1 V8 H23 Z" fill="#777" stroke="#a8a8a8" stroke-width="1.8"/><rect x="1" y="5" width="12.8" height="4.8" fill="#6a2530" stroke="#df3042" stroke-width="1.9"/></g><g transform="translate(703,511)" stroke-linecap="butt" stroke-linejoin="miter"><path d="M7.1,6 V30.9 H30.9 V10.6 L22.1,1.1 H7.1 V4" stroke="#a8a8a8" stroke-width="2.2"/><path d="M22.1,1.1 V10.6 H30.9 Z" fill="#777" stroke="#a8a8a8" stroke-width="2"/><rect x="1.1" y="7" width="16.3" height="6.2" fill="#6a2530" stroke="#df3042" stroke-width="2.1"/></g><g transform="translate(1298,515)" stroke-linecap="butt" stroke-linejoin="miter"><path d="M4.7,5.5 V23 H23 V8 L16.6,1.1 H4.7 V3" stroke="#a8a8a8" stroke-width="2"/><path d="M16.6,1.1 V8 H23 Z" fill="#777" stroke="#a8a8a8" stroke-width="1.8"/><rect x="1" y="5" width="12.8" height="4.8" fill="#6a2530" stroke="#df3042" stroke-width="1.9"/></g><path d="M684,576.2 L690.8,583 L684,589.8" stroke="#9c9c9c" stroke-width="2.2"/><g transform="translate(703,569)" stroke-linecap="butt" stroke-linejoin="miter"><rect x="1.1" y="1.1" width="29.8" height="25.8" stroke="#a8a8a8" stroke-width="2.2"/><rect x="2.2" y="2.2" width="27.6" height="6.4" fill="#464646"/><path d="M1.1,9.2 H30.9" stroke="#a8a8a8" stroke-width="2"/><circle cx="5" cy="5.2" r="1.1" fill="#e04040"/><circle cx="9.1" cy="5.2" r="1.1" fill="#e0b020"/><circle cx="13.3" cy="5.2" r="1.1" fill="#30c040"/><rect x="5" y="17" width="22.3" height="7" fill="#2d4a8a" stroke="#3f7be6" stroke-width="2"/></g><g transform="translate(1298,573)" stroke-linecap="butt" stroke-linejoin="miter"><path d="M19.2,1.2 H1.2 V20 H6" stroke="#a8a8a8" stroke-width="2"/><path d="M1.2,1.2 H20.8 V12" stroke="#a8a8a8" stroke-width="2"/><path d="M1.2,5.8 H20.8" stroke="#a8a8a8" stroke-width="1.8"/><rect x="4.3" y="10.2" width="4" height="6" fill="#3a5fb0"/><rect x="8.6" y="11" width="14.3" height="10.3" rx="1.6" fill="#555" stroke="#a8a8a8" stroke-width="1.9"/><circle cx="15.8" cy="16.2" r="2" stroke="#a8a8a8" stroke-width="1.6"/></g><g transform="translate(703,623)" stroke-linecap="butt" stroke-linejoin="miter"><path d="M7.1,6 V30.9 H30.9 V10.6 L22.1,1.1 H7.1 V4" stroke="#a8a8a8" stroke-width="2.2"/><path d="M22.1,1.1 V10.6 H30.9 Z" fill="#777" stroke="#a8a8a8" stroke-width="2"/><rect x="1.1" y="7" width="16.3" height="6.2" fill="#6a2530" stroke="#df3042" stroke-width="2.1"/></g><g transform="translate(1298,627)" stroke-linecap="butt" stroke-linejoin="miter"><path d="M4.7,5.5 V23 H23 V8 L16.6,1.1 H4.7 V3" stroke="#a8a8a8" stroke-width="2"/><path d="M16.6,1.1 V8 H23 Z" fill="#777" stroke="#a8a8a8" stroke-width="1.8"/><rect x="1" y="5" width="12.8" height="4.8" fill="#6a2530" stroke="#df3042" stroke-width="1.9"/></g><path d="M684,688.2 L690.8,695 L684,701.8" stroke="#9c9c9c" stroke-width="2.2"/><g transform="translate(703,681)" stroke-linecap="butt" stroke-linejoin="miter"><rect x="1.1" y="1.1" width="29.8" height="25.8" stroke="#a8a8a8" stroke-width="2.2"/><rect x="2.2" y="2.2" width="27.6" height="6.4" fill="#464646"/><path d="M1.1,9.2 H30.9" stroke="#a8a8a8" stroke-width="2"/><circle cx="5" cy="5.2" r="1.1" fill="#e04040"/><circle cx="9.1" cy="5.2" r="1.1" fill="#e0b020"/><circle cx="13.3" cy="5.2" r="1.1" fill="#30c040"/><rect x="5" y="17" width="22.3" height="7" fill="#2d4a8a" stroke="#3f7be6" stroke-width="2"/></g><g transform="translate(1298,685)" stroke-linecap="butt" stroke-linejoin="miter"><path d="M19.2,1.2 H1.2 V20 H6" stroke="#a8a8a8" stroke-width="2"/><path d="M1.2,1.2 H20.8 V12" stroke="#a8a8a8" stroke-width="2"/><path d="M1.2,5.8 H20.8" stroke="#a8a8a8" stroke-width="1.8"/><rect x="4.3" y="10.2" width="4" height="6" fill="#3a5fb0"/><rect x="8.6" y="11" width="14.3" height="10.3" rx="1.6" fill="#555" stroke="#a8a8a8" stroke-width="1.9"/><circle cx="15.8" cy="16.2" r="2" stroke="#a8a8a8" stroke-width="1.6"/></g><g transform="translate(703,735)" stroke-linecap="butt" stroke-linejoin="miter"><path d="M7.1,6 V30.9 H30.9 V10.6 L22.1,1.1 H7.1 V4" stroke="#a8a8a8" stroke-width="2.2"/><path d="M22.1,1.1 V10.6 H30.9 Z" fill="#777" stroke="#a8a8a8" stroke-width="2"/><rect x="1.1" y="7" width="16.3" height="6.2" fill="#6a2530" stroke="#df3042" stroke-width="2.1"/></g><g transform="translate(1298,739)" stroke-linecap="butt" stroke-linejoin="miter"><path d="M4.7,5.5 V23 H23 V8 L16.6,1.1 H4.7 V3" stroke="#a8a8a8" stroke-width="2"/><path d="M16.6,1.1 V8 H23 Z" fill="#777" stroke="#a8a8a8" stroke-width="1.8"/><rect x="1" y="5" width="12.8" height="4.8" fill="#6a2530" stroke="#df3042" stroke-width="1.9"/></g><g transform="translate(703,791)" stroke-linecap="butt" stroke-linejoin="miter"><path d="M7.1,6 V30.9 H30.9 V10.6 L22.1,1.1 H7.1 V4" stroke="#a8a8a8" stroke-width="2.2"/><path d="M22.1,1.1 V10.6 H30.9 Z" fill="#777" stroke="#a8a8a8" stroke-width="2"/><rect x="1.1" y="7" width="16.3" height="6.2" fill="#6a2530" stroke="#df3042" stroke-width="2.1"/></g><g transform="translate(1298,795)" stroke-linecap="butt" stroke-linejoin="miter"><path d="M4.7,5.5 V23 H23 V8 L16.6,1.1 H4.7 V3" stroke="#a8a8a8" stroke-width="2"/><path d="M16.6,1.1 V8 H23 Z" fill="#777" stroke="#a8a8a8" stroke-width="1.8"/><rect x="1" y="5" width="12.8" height="4.8" fill="#6a2530" stroke="#df3042" stroke-width="1.9"/></g><g transform="translate(705,847)" stroke-linecap="butt" stroke-linejoin="miter"><path d="M2.1,1.1 H18 L27.6,10.6 V30.9 H2.1 Z" stroke="#a8a8a8" stroke-width="2.2"/><path d="M18,1.1 V10.6 H27.6" stroke="#a8a8a8" stroke-width="2"/><path d="M7,11 H14 M7,15.5 H22.5 M7,20 H22.5 M7,24.5 H22.5" stroke="#a8a8a8" stroke-width="2"/></g><path d="M684,912.2 L690.8,919 L684,925.8" stroke="#9c9c9c" stroke-width="2.2"/><g transform="translate(703,905)" stroke-linecap="butt" stroke-linejoin="miter"><rect x="1.1" y="1.1" width="29.8" height="25.8" stroke="#a8a8a8" stroke-width="2.2"/><rect x="2.2" y="2.2" width="27.6" height="6.4" fill="#464646"/><path d="M1.1,9.2 H30.9" stroke="#a8a8a8" stroke-width="2"/><circle cx="5" cy="5.2" r="1.1" fill="#e04040"/><circle cx="9.1" cy="5.2" r="1.1" fill="#e0b020"/><circle cx="13.3" cy="5.2" r="1.1" fill="#30c040"/><rect x="5" y="17" width="22.3" height="7" fill="#2d4a8a" stroke="#3f7be6" stroke-width="2"/></g><g transform="translate(1298,909)" stroke-linecap="butt" stroke-linejoin="miter"><path d="M19.2,1.2 H1.2 V20 H6" stroke="#a8a8a8" stroke-width="2"/><path d="M1.2,1.2 H20.8 V12" stroke="#a8a8a8" stroke-width="2"/><path d="M1.2,5.8 H20.8" stroke="#a8a8a8" stroke-width="1.8"/><rect x="4.3" y="10.2" width="4" height="6" fill="#3a5fb0"/><rect x="8.6" y="11" width="14.3" height="10.3" rx="1.6" fill="#555" stroke="#a8a8a8" stroke-width="1.9"/><circle cx="15.8" cy="16.2" r="2" stroke="#a8a8a8" stroke-width="1.6"/></g><path d="M684,968.2 L690.8,975 L684,981.8" stroke="#9c9c9c" stroke-width="2.2"/><g transform="translate(704,959.5)" stroke-linejoin="miter" stroke-linecap="butt"><path d="M15,4 Q8,1.2 1.2,1.2 V28 Q8,28 15,30.6 Q22,28 29,28 V1.2 Q22,1.2 15,4 Z M15,4 V30.6" stroke="#4a7ff0" stroke-width="2.2"/><path d="M19.5,8 H25 M19.5,12 H25 M19.5,16 H25 M19.5,20 H25" stroke="#a8a8a8" stroke-width="1.8"/></g><g transform="translate(1298,963)" stroke-linecap="butt" stroke-linejoin="miter"><path d="M4.7,5.5 V23 H23 V8 L16.6,1.1 H4.7 V3" stroke="#a8a8a8" stroke-width="2"/><path d="M16.6,1.1 V8 H23 Z" fill="#777" stroke="#a8a8a8" stroke-width="1.8"/><rect x="1" y="5" width="12.8" height="4.8" fill="#6a2530" stroke="#df3042" stroke-width="1.9"/></g><path d="M684,1024.2 L690.8,1031 L684,1037.8" stroke="#9c9c9c" stroke-width="2.2"/><g transform="translate(704,1015)" stroke-linejoin="round"><rect x="5" y="1.2" width="24" height="28" rx="2" fill="#283450" stroke="#4a7ff0" stroke-width="2.2"/><path d="M5,4 H2.5 Q1.2,4 1.2,5.5 V29 Q1.2,31 3,31 H27 V29.2" stroke="#4a7ff0" stroke-width="2.2"/></g><g transform="translate(1298,1019)" stroke-linecap="butt" stroke-linejoin="miter"><path d="M4.7,5.5 V23 H23 V8 L16.6,1.1 H4.7 V3" stroke="#a8a8a8" stroke-width="2"/><path d="M16.6,1.1 V8 H23 Z" fill="#777" stroke="#a8a8a8" stroke-width="1.8"/><rect x="1" y="5" width="12.8" height="4.8" fill="#6a2530" stroke="#df3042" stroke-width="1.9"/></g><path d="M684,1080.2 L690.8,1087 L684,1093.8" stroke="#9c9c9c" stroke-width="2.2"/><g transform="translate(705,1071)" stroke-linecap="butt" stroke-linejoin="miter"><path d="M2.1,1.1 H18 L27.6,10.6 V30.9 H2.1 Z" stroke="#a8a8a8" stroke-width="2.2"/><path d="M18,1.1 V10.6 H27.6" stroke="#a8a8a8" stroke-width="2"/><path d="M7,11 H14 M7,15.5 H22.5 M7,20 H22.5 M7,24.5 H22.5" stroke="#a8a8a8" stroke-width="2"/></g><g transform="translate(1298,1075)" stroke-linecap="butt" stroke-linejoin="miter"><path d="M4.7,5.5 V23 H23 V8 L16.6,1.1 H4.7 V3" stroke="#a8a8a8" stroke-width="2"/><path d="M16.6,1.1 V8 H23 Z" fill="#777" stroke="#a8a8a8" stroke-width="1.8"/><rect x="1" y="5" width="12.8" height="4.8" fill="#6a2530" stroke="#df3042" stroke-width="1.9"/></g><path d="M684,1136.2 L690.8,1143 L684,1149.8" stroke="#9c9c9c" stroke-width="2.2"/><g transform="translate(705,1127)" stroke-linecap="butt" stroke-linejoin="miter"><path d="M2.1,1.1 H18 L27.6,10.6 V30.9 H2.1 Z" stroke="#a8a8a8" stroke-width="2.2"/><path d="M18,1.1 V10.6 H27.6" stroke="#a8a8a8" stroke-width="2"/><path d="M7,11 H14 M7,15.5 H22.5 M7,20 H22.5 M7,24.5 H22.5" stroke="#a8a8a8" stroke-width="2"/></g><g transform="translate(1298,1131)" stroke-linecap="butt" stroke-linejoin="miter"><path d="M4.7,5.5 V23 H23 V8 L16.6,1.1 H4.7 V3" stroke="#a8a8a8" stroke-width="2"/><path d="M16.6,1.1 V8 H23 Z" fill="#777" stroke="#a8a8a8" stroke-width="1.8"/><rect x="1" y="5" width="12.8" height="4.8" fill="#6a2530" stroke="#df3042" stroke-width="1.9"/></g></svg>
<div style="left:655px;top:79px;width:881px;height:61px;background:#1f1f1f;border-radius:0px;"></div>
<div style="left:655px;top:140px;width:881px;height:2px;background:#363636;border-radius:0px;"></div>
<div class="t" style="left:743.1px;top:99.4px;font-size:25.2px;line-height:25.2px;color:#f2f2f2;">Title</div>
<div style="left:1527px;top:662px;width:4px;height:477px;background:#2e2e2e;border-radius:2px;"></div>
<div style="left:1535px;top:0px;width:2px;height:1139px;background:#3a3a3a;border-radius:0px;"></div>
<div style="left:1537px;top:77px;width:640px;height:2px;background:#3a3a3a;border-radius:0px;"></div>
<div class="t" style="left:1563.8px;top:22.1px;font-size:25.5px;line-height:25.5px;color:#f4f4f4;font-weight:700;transform:scaleX(0.9371);transform-origin:left center;">AndreaFraser_1percent.pdf</div>
<div class="t" style="left:1603px;top:101.3px;font-size:25px;line-height:25px;color:#a8a8a8;font-weight:700;letter-spacing:-0.5px;">Attachment Info</div>
<svg style="left:2120px;top:95px;" width="40" height="30" viewBox="2120 95 40 30" fill="none" stroke-linecap="round" stroke-linejoin="round"><path d="M2130,115.7 L2140.8,105 L2151.5,115.7" stroke="#a4a4a4" stroke-width="2.2"/></svg>
<div style="left:1556px;top:155px;width:600px;height:830px;background:#ffffff;border-radius:9px;"></div>
<div class="t" style="left:1722.6px;top:203.2px;font-size:10.3px;line-height:10.3px;color:#000000;font-weight:700;transform:scaleX(0.9519);transform-origin:left center;">ANDREA FRASER</div>
<div class="t" style="left:1722.6px;top:234.4px;font-size:10.1px;line-height:10.1px;color:#000000;font-weight:700;transform:scaleX(0.9650);transform-origin:left center;">L&#8217;1%, C&#8217;EST MOI</div>
<div class="t" style="left:1592.7px;top:313.6px;font-size:8.2px;line-height:8.2px;color:#000000;font-weight:700;letter-spacing:-0.42px;">Figure 1: Andrea Fraser,</div>
<div class="t" style="left:1592.7px;top:325.6px;font-size:8.2px;line-height:8.2px;color:#000000;font-weight:700;letter-spacing:-0.42px;">&#8222;Index&#8220;, anonym ver&#246;ffentlicht</div>
<div class="t" style="left:1592.7px;top:337.7px;font-size:8.2px;line-height:8.2px;color:#000000;font-weight:700;letter-spacing:-0.42px;">/ published anonymously in</div>
<div class="t" style="left:1592.7px;top:349.8px;font-size:8.2px;line-height:8.2px;color:#000000;font-weight:700;letter-spacing:-0.42px;">Artforum, Sommer / Summer</div>
<div class="t" style="left:1592.7px;top:361.9px;font-size:8.2px;line-height:8.2px;color:#000000;font-weight:700;letter-spacing:-0.42px;">2011, S. / p. 431.</div>
<div class="t" style="left:1592.7px;top:374.0px;font-size:8.2px;line-height:8.2px;color:#000000;font-weight:700;letter-spacing:-0.42px;">Produziert f&#252;r / Produced</div>
<div class="t" style="left:1592.7px;top:386.0px;font-size:8.2px;line-height:8.2px;color:#000000;font-weight:700;letter-spacing:-0.42px;">for &#8222;24 Advertisements&#8220;, ein</div>
<div class="t" style="left:1592.7px;top:398.1px;font-size:8.2px;line-height:8.2px;color:#000000;font-weight:700;letter-spacing:-0.42px;">Projekt von / a project by Jacob</div>
<div class="t" style="left:1592.7px;top:410.2px;font-size:8.2px;line-height:8.2px;color:#000000;font-weight:700;letter-spacing:-0.42px;">Fabricus, mit Designassistenz</div>
<div class="t" style="left:1592.7px;top:422.3px;font-size:8.2px;line-height:8.2px;color:#000000;font-weight:700;letter-spacing:-0.42px;">von / with design assistance</div>
<div class="t" style="left:1592.7px;top:434.4px;font-size:8.2px;line-height:8.2px;color:#000000;font-weight:700;letter-spacing:-0.42px;">by Santiago P&#233;rez Gomes-de</div>
<div class="t" style="left:1592.7px;top:446.4px;font-size:8.2px;line-height:8.2px;color:#000000;font-weight:700;letter-spacing:-0.42px;">Silva, Studio Manuel Raeder.</div>
<div class="t" style="left:1592.8px;top:590.8px;font-size:8.8px;line-height:8.8px;color:#000000;font-weight:700;-webkit-text-stroke:0.3px #000;">How do the world&#8217;s leading collectors earn their</div>
<div class="t" style="left:1592.8px;top:604.0px;font-size:8.8px;line-height:8.8px;color:#000000;font-weight:700;-webkit-text-stroke:0.3px #000;">money? How do their philanthropic activities relate to</div>
<div class="t" style="left:1592.8px;top:617.2px;font-size:8.8px;line-height:8.8px;color:#000000;font-weight:700;-webkit-text-stroke:0.3px #000;">their economic operations? And what does collecting</div>
<div class="t" style="left:1592.8px;top:630.4px;font-size:8.8px;line-height:8.8px;color:#000000;font-weight:700;-webkit-text-stroke:0.3px #000;">art mean to them and how does it affect the art world?</div>
<div class="t" style="left:1592.8px;top:643.6px;font-size:8.8px;line-height:8.8px;color:#000000;font-weight:700;-webkit-text-stroke:0.3px #000;">If we look at the incomes of this class, it is conspicuous</div>
<div class="t" style="left:1592.8px;top:656.9px;font-size:8.8px;line-height:8.8px;color:#000000;font-weight:700;-webkit-text-stroke:0.3px #000;">that their profits are based on the growth of income</div>
<div class="t" style="left:1592.8px;top:670.1px;font-size:8.8px;line-height:8.8px;color:#000000;font-weight:700;-webkit-text-stroke:0.3px #000;">inequality all over the world.</div>
<div class="t" style="left:1610.8px;top:683.3px;font-size:8.8px;line-height:8.8px;color:#000000;font-weight:700;-webkit-text-stroke:0.3px #000;">This redistribution of capital in turn has a direct</div>
<div class="t" style="left:1592.8px;top:696.5px;font-size:8.8px;line-height:8.8px;color:#000000;font-weight:700;-webkit-text-stroke:0.3px #000;">influence on the art market: the greater the discrepancy</div>
<div class="t" style="left:1592.8px;top:709.7px;font-size:8.8px;line-height:8.8px;color:#000000;font-weight:700;-webkit-text-stroke:0.3px #000;">between the rich and the poor, the higher prices in</div>
<div class="t" style="left:1592.8px;top:723.0px;font-size:8.8px;line-height:8.8px;color:#000000;font-weight:700;-webkit-text-stroke:0.3px #000;">this market rise. The situation, it would seem, urgently</div>
<div class="t" style="left:1592.8px;top:736.2px;font-size:8.8px;line-height:8.8px;color:#000000;font-weight:700;-webkit-text-stroke:0.3px #000;">calls for the development of alternatives to the existing</div>
<div class="t" style="left:1592.8px;top:749.4px;font-size:8.8px;line-height:8.8px;color:#000000;font-weight:700;-webkit-text-stroke:0.3px #000;">system.</div>
<div class="t" style="left:1592.5px;top:773.8px;font-size:11.75px;line-height:11.75px;color:#000000;font-family:'Liberation Serif', serif;-webkit-text-stroke:0.25px #000;">Who are the collectors of contemporary art today?</div>
<div class="t" style="left:1592.5px;top:789.1px;font-size:11.75px;line-height:11.75px;color:#000000;font-family:'Liberation Serif', serif;-webkit-text-stroke:0.25px #000;">The <i>ARTnews</i> 200 Top Collectors list is an obvious</div>
<div class="t" style="left:1592.5px;top:804.4px;font-size:11.75px;line-height:11.75px;color:#000000;font-family:'Liberation Serif', serif;-webkit-text-stroke:0.25px #000;">place to start. Near the top of the alphabetical</div>
<div class="t" style="left:1592.5px;top:819.7px;font-size:11.75px;line-height:11.75px;color:#000000;font-family:'Liberation Serif', serif;-webkit-text-stroke:0.25px #000;">list is Roman Abramovich, estimated by <i>Forbes</i></div>
<div class="t" style="left:1592.5px;top:835.1px;font-size:11.75px;line-height:11.75px;color:#000000;font-family:'Liberation Serif', serif;-webkit-text-stroke:0.25px #000;">to be worth $13.4 billion, who admitted paying</div>
<div class="t" style="left:1592.5px;top:850.4px;font-size:11.75px;line-height:11.75px;color:#000000;font-family:'Liberation Serif', serif;-webkit-text-stroke:0.25px #000;">billions in bribes for control of Russian oil and</div>
<div class="t" style="left:1592.5px;top:865.7px;font-size:11.75px;line-height:11.75px;color:#000000;font-family:'Liberation Serif', serif;-webkit-text-stroke:0.25px #000;">aluminum assets.&#185; Bernard Arnault, listed by <i>Forbes</i></div>
<div class="t" style="left:1592.5px;top:881.1px;font-size:11.75px;line-height:11.75px;color:#000000;font-family:'Liberation Serif', serif;-webkit-text-stroke:0.25px #000;">as the fourth richest man in the world with $41</div>
<div class="t" style="left:1845.9px;top:588.3px;font-size:11.75px;line-height:11.75px;color:#000000;font-family:'Liberation Serif', serif;-webkit-text-stroke:0.25px #000;">billion, controls <span style='font-size:9px'>LVMH</span>, which, despite the debt</div>
<div class="t" style="left:1845.9px;top:603.7px;font-size:11.75px;line-height:11.75px;color:#000000;font-family:'Liberation Serif', serif;-webkit-text-stroke:0.25px #000;">crisis, reported a sales growth of 13 percent in</div>
<div class="t" style="left:1845.9px;top:619.1px;font-size:11.75px;line-height:11.75px;color:#000000;font-family:'Liberation Serif', serif;-webkit-text-stroke:0.25px #000;">the first half of 2011.&#178; Hedge fund manager John</div>
<div class="t" style="left:1845.9px;top:634.5px;font-size:11.75px;line-height:11.75px;color:#000000;font-family:'Liberation Serif', serif;-webkit-text-stroke:0.25px #000;">Arnold, who got his start at Enron &#8211; where he</div>
<div class="t" style="left:1845.9px;top:649.9px;font-size:11.75px;line-height:11.75px;color:#000000;font-family:'Liberation Serif', serif;-webkit-text-stroke:0.25px #000;">received an $8 million bonus just before it col-</div>
<div class="t" style="left:1845.9px;top:665.3px;font-size:11.75px;line-height:11.75px;color:#000000;font-family:'Liberation Serif', serif;-webkit-text-stroke:0.25px #000;">lapsed &#8211; recently gave $150,000 to an organization</div>
<div class="t" style="left:1845.9px;top:680.7px;font-size:11.75px;line-height:11.75px;color:#000000;font-family:'Liberation Serif', serif;-webkit-text-stroke:0.25px #000;">seeking to limit public pensions.&#179; MoMA, MoCA</div>
<div class="t" style="left:1845.9px;top:696.1px;font-size:11.75px;line-height:11.75px;color:#000000;font-family:'Liberation Serif', serif;-webkit-text-stroke:0.25px #000;">and <span style='font-size:9px'>LACMA</span> trustee Eli Broad is worth $5.8 billion</div>
<div class="t" style="left:1845.9px;top:711.5px;font-size:11.75px;line-height:11.75px;color:#000000;font-family:'Liberation Serif', serif;-webkit-text-stroke:0.25px #000;">and was a board member and major shareholder</div>
<div class="t" style="left:1845.9px;top:726.9px;font-size:11.75px;line-height:11.75px;color:#000000;font-family:'Liberation Serif', serif;-webkit-text-stroke:0.25px #000;">of AIG. Steven A. Cohen, estimated to be worth</div>
<div class="t" style="left:1845.9px;top:742.3px;font-size:11.75px;line-height:11.75px;color:#000000;font-family:'Liberation Serif', serif;-webkit-text-stroke:0.25px #000;">$8 billion, is the founder of <span style='font-size:9px'>SAC</span> Capital Advisors,</div>
<div class="t" style="left:1845.9px;top:757.7px;font-size:11.75px;line-height:11.75px;color:#000000;font-family:'Liberation Serif', serif;-webkit-text-stroke:0.25px #000;">which is under investigation for insider trading.&#8308;</div>
<div class="t" style="left:1845.9px;top:773.1px;font-size:11.75px;line-height:11.75px;color:#000000;font-family:'Liberation Serif', serif;-webkit-text-stroke:0.25px #000;">Guggenheim trustee Dimitris Daskalopoulos, who</div>
<div class="t" style="left:1845.9px;top:788.5px;font-size:11.75px;line-height:11.75px;color:#000000;font-family:'Liberation Serif', serif;-webkit-text-stroke:0.25px #000;">is also chairman of the Hellenic Federation of</div>
<div class="t" style="left:1845.9px;top:803.9px;font-size:11.75px;line-height:11.75px;color:#000000;font-family:'Liberation Serif', serif;-webkit-text-stroke:0.25px #000;">Enterprises, recently called for &#8220;modern private</div>
<div class="t" style="left:1845.9px;top:819.3px;font-size:11.75px;line-height:11.75px;color:#000000;font-family:'Liberation Serif', serif;-webkit-text-stroke:0.25px #000;">initiative&#8221; to save the failing Greek economy</div>
<div class="t" style="left:1845.9px;top:834.7px;font-size:11.75px;line-height:11.75px;color:#000000;font-family:'Liberation Serif', serif;-webkit-text-stroke:0.25px #000;">from a &#8220;bloated and parasitic&#8221; &#8220;patronage-ridden</div>
<div class="t" style="left:1845.9px;top:850.1px;font-size:11.75px;line-height:11.75px;color:#000000;font-family:'Liberation Serif', serif;-webkit-text-stroke:0.25px #000;">state&#8221;.&#8309; Frank J. and Lorenzo Fertitta were the</div>
<div class="t" style="left:1845.9px;top:865.5px;font-size:11.75px;line-height:11.75px;color:#000000;font-family:'Liberation Serif', serif;-webkit-text-stroke:0.25px #000;">third and fourth highest paid men in the <span style='font-size:9px'>US</span> in</div>
<div class="t" style="left:1845.9px;top:880.9px;font-size:11.75px;line-height:11.75px;color:#000000;font-family:'Liberation Serif', serif;-webkit-text-stroke:0.25px #000;">2007, according to <i>Forbes</i>. Guggenheim trustee</div>
<div class="t" style="left:1592.5px;top:947.3px;font-size:7.2px;line-height:7.2px;color:#000000;font-weight:700;">114</div>
<div style="left:1722.4px;top:311.9px;width:361.5px;height:247.2px;background:#ebeceb;border-radius:0px;"></div>
<div class="t" style="left:1821.5px;top:334.7px;font-size:8.5px;line-height:8.5px;color:#000000;font-weight:700;letter-spacing:0.2px;">MEI MOSES&#174; 2006 ANNUAL ALL ART INDEX AND</div>
<div class="t" style="left:1831.4px;top:344.9px;font-size:8.5px;line-height:8.5px;color:#000000;font-weight:700;letter-spacing:0.2px;">S&amp;P 500 TOTAL RETURN INDEX (1956&#8211;2006)</div>
<svg style="left:1722px;top:311px;" width="362" height="248" viewBox="1722 311 362 248" fill="none" stroke-linecap="round" stroke-linejoin="round"><rect x="1788.8" y="364" width="280.9" height="153.6" fill="#fff" stroke="#222" stroke-width="1.3"/><path d="M1777,375.9 H2069" stroke="#e8203a" stroke-width="1.2" stroke-dasharray="1.2 2.8" stroke-linecap="butt"/><path d="M1777,400.8 H2069" stroke="#e8203a" stroke-width="1.2" stroke-dasharray="1.2 2.8" stroke-linecap="butt"/><path d="M1777,423.5 H2069" stroke="#e8203a" stroke-width="1.2" stroke-dasharray="1.2 2.8" stroke-linecap="butt"/><path d="M1777,447 H2069" stroke="#e8203a" stroke-width="1.2" stroke-dasharray="1.2 2.8" stroke-linecap="butt"/><path d="M1777,470.2 H2069" stroke="#e8203a" stroke-width="1.2" stroke-dasharray="1.2 2.8" stroke-linecap="butt"/><path d="M1777,493.7 H2069" stroke="#e8203a" stroke-width="1.2" stroke-dasharray="1.2 2.8" stroke-linecap="butt"/><path d="M1788.8,415.5 H2069.7 M1788.8,466.7 H2069.7" stroke="#222" stroke-width="1.2"/><polyline points="1794.7,517.6 1799.4,512.2 1805.3,509.8 1811.3,509.8 1816.0,503.4 1821.9,497.2 1827.9,501.5 1833.8,501.0 1838.5,493.2 1844.5,492.5 1849.2,494.4 1856.3,487.3 1862.2,479.5 1868.2,482.6 1872.9,477.8 1877.7,477.8 1884.8,469.5 1889.5,470.2 1895.4,476.6 1901.4,470.2 1907.3,469.5 1913.2,463.6 1918.0,461.2 1923.9,455.8 1928.6,453.6 1934.6,455.8 1938.1,455.3 1944.0,449.8 1951.2,443.9 1955.9,443.9 1959.4,439.9 1966.6,429.9 1972.5,420.4 1979.6,419.3 1985.5,430.4 1991.5,430.4 1997.4,431.6 2002.1,433.2 2008.1,427.5 2014.0,428.0 2019.9,428.0 2025.8,428.5 2030.6,425.7 2035.3,422.6 2041.2,422.8 2047.2,422.8 2051.9,419.0 2057.8,418.5 2063.8,414.3 2069.7,411.0" stroke="#2ab0e8" stroke-width="1.4"/><polyline points="1794.7,517.6 1799.4,512.2 1805.3,509.8 1811.3,509.8 1816.0,503.9 1821.9,506.3 1827.9,502.2 1833.8,499.1 1838.5,496.3 1844.5,498.0 1849.2,494.4 1856.3,490.8 1862.2,493.2 1868.2,493.2 1872.9,489.7 1877.7,485.6 1883.6,488.5 1889.5,495.1 1895.4,489.0 1901.4,483.7 1907.3,485.4 1913.2,482.6 1918.0,478.3 1923.9,474.3 1928.6,474.7 1934.6,470.2 1940.5,466.0 1946.4,466.0 1951.2,460.0 1955.9,457.2 1961.8,455.3 1967.7,452.2 1973.7,444.6 1979.6,444.1 1985.5,438.7 1991.5,436.8 1997.4,435.1 2003.3,435.1 2008.1,429.2 2014.0,424.5 2019.9,419.3 2025.8,412.6 2030.6,407.2 2036.5,408.6 2041.2,411.4 2047.2,416.6 2051.9,412.6 2057.8,411.0 2063.8,408.6 2069.7,406.2" stroke="#2a5ea8" stroke-width="1.5"/><polyline points="1788.8,494.4 1800.6,486.1 1810.1,493.2 1814.8,491.6 1819.6,489.0 1825.5,490.1 1830.2,483.7 1836.2,489.7 1842.1,489.7 1850.4,482.6 1856.3,487.3 1862.2,483.0 1867.0,480.2 1872.9,480.9 1877.7,494.4 1882.4,490.8 1888.3,489.7 1893.1,495.1 1897.8,498.0 1903.7,498.4 1908.5,497.2 1913.2,494.9 1918.7,497.5 1923.9,484.9 1928.6,488.0 1933.4,485.4 1938.1,476.6 1944.0,473.1 1948.8,466.0 1953.5,464.3 1959.4,439.4 1964.2,473.1 1970.1,449.4 1974.9,460.0 1980.3,463.6 1985.5,471.2 1990.3,459.3 1995.5,463.1 2000.9,464.3 2005.7,460.0 2010.4,446.3 2016.3,435.1 2021.1,424.9 2027.0,418.5 2031.8,397.7 2036.5,429.9 2041.2,443.4 2047.2,435.1 2056.7,396.5 2062.6,388.9 2068.0,375.4" stroke="#e8203a" stroke-width="1.3"/><circle cx="1800.6" cy="486.1" r="1.3" fill="#e8203a"/><circle cx="1810.1" cy="493.2" r="1.3" fill="#e8203a"/><circle cx="1814.8" cy="491.6" r="1.3" fill="#e8203a"/><circle cx="1819.6" cy="489.0" r="1.3" fill="#e8203a"/><circle cx="1825.5" cy="490.1" r="1.3" fill="#e8203a"/><circle cx="1830.2" cy="483.7" r="1.3" fill="#e8203a"/><circle cx="1836.2" cy="489.7" r="1.3" fill="#e8203a"/><circle cx="1842.1" cy="489.7" r="1.3" fill="#e8203a"/><circle cx="1850.4" cy="482.6" r="1.3" fill="#e8203a"/><circle cx="1856.3" cy="487.3" r="1.3" fill="#e8203a"/><circle cx="1862.2" cy="483.0" r="1.3" fill="#e8203a"/><circle cx="1867.0" cy="480.2" r="1.3" fill="#e8203a"/><circle cx="1872.9" cy="480.9" r="1.3" fill="#e8203a"/><circle cx="1877.7" cy="494.4" r="1.3" fill="#e8203a"/><circle cx="1882.4" cy="490.8" r="1.3" fill="#e8203a"/><circle cx="1888.3" cy="489.7" r="1.3" fill="#e8203a"/><circle cx="1893.1" cy="495.1" r="1.3" fill="#e8203a"/><circle cx="1897.8" cy="498.0" r="1.3" fill="#e8203a"/><circle cx="1903.7" cy="498.4" r="1.3" fill="#e8203a"/><circle cx="1908.5" cy="497.2" r="1.3" fill="#e8203a"/><circle cx="1913.2" cy="494.9" r="1.3" fill="#e8203a"/><circle cx="1918.7" cy="497.5" r="1.3" fill="#e8203a"/><circle cx="1923.9" cy="484.9" r="1.3" fill="#e8203a"/><circle cx="1928.6" cy="488.0" r="1.3" fill="#e8203a"/><circle cx="1933.4" cy="485.4" r="1.3" fill="#e8203a"/><circle cx="1938.1" cy="476.6" r="1.3" fill="#e8203a"/><circle cx="1944.0" cy="473.1" r="1.3" fill="#e8203a"/><circle cx="1948.8" cy="466.0" r="1.3" fill="#e8203a"/><circle cx="1953.5" cy="464.3" r="1.3" fill="#e8203a"/><circle cx="1959.4" cy="439.4" r="1.3" fill="#e8203a"/><circle cx="1964.2" cy="473.1" r="1.3" fill="#e8203a"/><circle cx="1970.1" cy="449.4" r="1.3" fill="#e8203a"/><circle cx="1974.9" cy="460.0" r="1.3" fill="#e8203a"/><circle cx="1980.3" cy="463.6" r="1.3" fill="#e8203a"/><circle cx="1985.5" cy="471.2" r="1.3" fill="#e8203a"/><circle cx="1990.3" cy="459.3" r="1.3" fill="#e8203a"/><circle cx="1995.5" cy="463.1" r="1.3" fill="#e8203a"/><circle cx="2000.9" cy="464.3" r="1.3" fill="#e8203a"/><circle cx="2005.7" cy="460.0" r="1.3" fill="#e8203a"/><circle cx="2010.4" cy="446.3" r="1.3" fill="#e8203a"/><circle cx="2016.3" cy="435.1" r="1.3" fill="#e8203a"/><circle cx="2021.1" cy="424.9" r="1.3" fill="#e8203a"/><circle cx="2027.0" cy="418.5" r="1.3" fill="#e8203a"/><circle cx="2031.8" cy="397.7" r="1.3" fill="#e8203a"/><circle cx="2036.5" cy="429.9" r="1.3" fill="#e8203a"/><circle cx="2041.2" cy="443.4" r="1.3" fill="#e8203a"/><circle cx="2047.2" cy="435.1" r="1.3" fill="#e8203a"/><circle cx="2056.7" cy="396.5" r="1.3" fill="#e8203a"/><circle cx="2062.6" cy="388.9" r="1.3" fill="#e8203a"/><circle cx="2068.0" cy="375.4" r="1.3" fill="#e8203a"/><path d="M1800.6,382.5 H1819.6" stroke="#2ab0e8" stroke-width="1.6"/><path d="M1800.6,393.6 H1819.6" stroke="#2a5ea8" stroke-width="1.6"/></svg>
<div class="t" style="left:1824.8px;top:379.6px;font-size:7.2px;line-height:7.2px;color:#222;">ALL ART</div>
<div class="t" style="left:1824.8px;top:391.0px;font-size:7.2px;line-height:7.2px;color:#222;">S&amp;P 500</div>
<div class="t" style="right:455.79999999999995px;top:361.9px;font-size:7.2px;line-height:7.2px;color:#222;">1000</div>
<div class="t" style="right:455.79999999999995px;top:412.3px;font-size:7.2px;line-height:7.2px;color:#222;">100</div>
<div class="t" style="right:455.79999999999995px;top:463.3px;font-size:7.2px;line-height:7.2px;color:#222;">10</div>
<div class="t" style="right:455.79999999999995px;top:513.6px;font-size:7.2px;line-height:7.2px;color:#222;">1</div>
<div class="t" style="right:466.20000000000005px;top:373.0px;font-size:7px;line-height:7px;color:#e8203a;font-weight:700;">6%</div>
<div class="t" style="right:466.20000000000005px;top:397.9px;font-size:7px;line-height:7px;color:#e8203a;font-weight:700;">5%</div>
<div class="t" style="right:466.20000000000005px;top:420.6px;font-size:7px;line-height:7px;color:#e8203a;font-weight:700;">4%</div>
<div class="t" style="right:466.20000000000005px;top:444.1px;font-size:7px;line-height:7px;color:#e8203a;font-weight:700;">3%</div>
<div class="t" style="right:466.20000000000005px;top:467.3px;font-size:7px;line-height:7px;color:#e8203a;font-weight:700;">2%</div>
<div class="t" style="right:466.20000000000005px;top:490.8px;font-size:7px;line-height:7px;color:#e8203a;font-weight:700;">1%</div>
<div class="t" style="right:466.20000000000005px;top:513.3px;font-size:7px;line-height:7px;color:#e8203a;font-weight:700;">0%</div>
<div class="t" style="left:1778.8px;top:531px;width:20px;height:8px;font-size:7.4px;line-height:8px;color:#111;font-weight:700;text-align:center;transform:rotate(-90deg);">1956</div>
<div class="t" style="left:1806.9px;top:531px;width:20px;height:8px;font-size:7.4px;line-height:8px;color:#111;font-weight:700;text-align:center;transform:rotate(-90deg);">1961</div>
<div class="t" style="left:1835.0px;top:531px;width:20px;height:8px;font-size:7.4px;line-height:8px;color:#111;font-weight:700;text-align:center;transform:rotate(-90deg);">1966</div>
<div class="t" style="left:1863.1px;top:531px;width:20px;height:8px;font-size:7.4px;line-height:8px;color:#111;font-weight:700;text-align:center;transform:rotate(-90deg);">1971</div>
<div class="t" style="left:1891.2px;top:531px;width:20px;height:8px;font-size:7.4px;line-height:8px;color:#111;font-weight:700;text-align:center;transform:rotate(-90deg);">1976</div>
<div class="t" style="left:1919.2px;top:531px;width:20px;height:8px;font-size:7.4px;line-height:8px;color:#111;font-weight:700;text-align:center;transform:rotate(-90deg);">1981</div>
<div class="t" style="left:1947.3px;top:531px;width:20px;height:8px;font-size:7.4px;line-height:8px;color:#111;font-weight:700;text-align:center;transform:rotate(-90deg);">1986</div>
<div class="t" style="left:1975.4px;top:531px;width:20px;height:8px;font-size:7.4px;line-height:8px;color:#111;font-weight:700;text-align:center;transform:rotate(-90deg);">1991</div>
<div class="t" style="left:2003.5px;top:531px;width:20px;height:8px;font-size:7.4px;line-height:8px;color:#111;font-weight:700;text-align:center;transform:rotate(-90deg);">1996</div>
<div class="t" style="left:2031.6px;top:531px;width:20px;height:8px;font-size:7.4px;line-height:8px;color:#111;font-weight:700;text-align:center;transform:rotate(-90deg);">2001</div>
<div class="t" style="left:2059.7px;top:531px;width:20px;height:8px;font-size:7.4px;line-height:8px;color:#111;font-weight:700;text-align:center;transform:rotate(-90deg);">2006</div>
<div class="t" style="left:1637.9px;top:439.6px;width:197px;height:10px;font-family:'Liberation Serif', serif;font-weight:700;font-size:9.6px;line-height:10px;color:#e8203a;text-align:center;transform:rotate(-90deg);letter-spacing:-0.05px;-webkit-text-stroke:0.3px #e8203a">Trends in Income Inequality in the United States</div>
<div class="t" style="left:1671.4px;top:439.6px;width:156.5px;height:10px;font-family:'Liberation Serif', serif;font-weight:700;font-size:9.6px;line-height:10px;color:#e8203a;text-align:center;transform:rotate(-90deg);letter-spacing:-0.3px;-webkit-text-stroke:0.3px #e8203a">Top 0.01% Share of Wealth, 1956-2006</div>
<div class="t" style="right:585px;top:1014.1px;font-size:25.2px;line-height:25.2px;color:#9e9e9e;transform:scaleX(1.0117);transform-origin:right center;">Title</div>
<div class="t" style="left:1683px;top:1014.1px;font-size:25.2px;line-height:25.2px;color:#f2f2f2;">AndreaFraser_1percent.pdf</div>
<div class="t" style="right:585px;top:1064.8px;font-size:25.2px;line-height:25.2px;color:#9e9e9e;transform:scaleX(0.9769);transform-origin:right center;">Filename</div>
<div class="t" style="left:1683px;top:1064.8px;font-size:25.2px;line-height:25.2px;color:#f2f2f2;">AndreaFraser_1percent.pdf</div>
<div class="t" style="right:585px;top:1115.1px;font-size:25.2px;line-height:25.2px;color:#9e9e9e;transform:scaleX(1.0712);transform-origin:right center;">Modified</div>
<div class="t" style="left:1683px;top:1115.1px;font-size:25.2px;line-height:25.2px;color:#f2f2f2;transform:scaleX(1.0154);transform-origin:left center;">3/24/2026, 12:56:42 AM</div>
<div style="left:2177px;top:0px;width:2px;height:1139px;background:#3a3a3a;border-radius:0px;"></div>
<svg style="left:2179px;top:0px;" width="62" height="440" viewBox="2179 0 62 440" fill="none" stroke-linecap="round" stroke-linejoin="round"><g stroke="#a8a8a8" stroke-width="2.3" stroke-linecap="butt"><rect x="2198.2" y="24.4" width="33.8" height="25.6" rx="2.5"/><path d="M2216.3,24.4 V50"/><path d="M2221,30 H2227.3 M2221,36.1 H2227.3 M2221,42.2 H2227.3"/></g><path d="M2195.5,77.8 H2234.5" stroke="#454545" stroke-width="2" stroke-linecap="butt"/><path d="M2195.5,363.7 H2234.5" stroke="#454545" stroke-width="2" stroke-linecap="butt"/><g stroke="#3cb862" stroke-width="2.5" stroke-linecap="round"><path d="M2227.2,119.3 A7.2,7.2 0 1 0 2218.5,108 L2200.05,124.95 A5.3,5.3 0 0 0 2207.55,132.45 L2225.2,114.8 A3,3 0 0 0 2221,110.6 L2208,123.6"/><circle cx="2225.8" cy="129.4" r="7.9" fill="#2e2e2e"/><path d="M2225.8,129.6 V134.2" stroke-width="2.7" stroke-linecap="butt"/><circle cx="2225.8" cy="126.2" r="1.3" fill="#3cb862" stroke="none"/></g><g stroke="#59adc6" stroke-width="2.4" stroke-linecap="butt" stroke-linejoin="miter"><path d="M2198.1,175.4 V172.9 L2209,168.4 L2219.9,172.9 V175.4 Z"/><path d="M2200.3,176.5 V189 M2206.1,176.5 V189 M2211.6,176.5 V184.6 M2217.7,176.5 V182.2"/><path d="M2196.9,190.3 H2208.5"/><path d="M2195,195.6 H2208.5"/><path d="M2213.2,205.9 H2232.4 Q2233.9,205.9 2233.9,204.4 V190.3 Q2233.9,188.7 2232.4,188.7 H2224.3 L2222.8,185.6 H2216.2 L2214.7,188.7 H2213.2 Q2211.6,188.7 2211.6,190.3 V204.4 Q2211.6,205.9 2213.2,205.9 Z" stroke-linejoin="round"/><path d="M2211.6,193.8 H2233.9"/></g><g stroke="#ec6a3c" stroke-width="2.3" stroke-linejoin="miter"><path d="M2198.2,238.2 H2211.8 L2232,258.6 L2217.9,272 L2198.2,252.2 Z"/><circle cx="2205" cy="245.2" r="1.2" fill="#ec6a3c" stroke-width="1.5"/></g><g stroke="#d4794a" stroke-width="2.5" stroke-linecap="round"><path d="M2204.8,326.75 H2203.95 A7.6,7.6 0 0 1 2203.95,311.55 H2214.25 A7.6,7.6 0 1 1 2212.93,326.63"/><path d="M2225.4,318.95 H2226.25 A7.6,7.6 0 0 1 2226.25,334.15 H2215.95 A7.6,7.6 0 1 1 2217.27,319.07"/></g><g stroke="#a8a8a8" stroke-width="2.4"><path d="M2221.8,420.6 A16.9,16.9 0 1 1 2230.2,412.8"/><path d="M2205,404.5 H2223.6 M2216.4,397.4 L2223.6,404.5 L2216.4,411.6"/><path d="M2223.1,417 H2235.1 L2229.3,423.3 Z" fill="#a8a8a8" stroke="none"/></g></svg>
<div style="left:767px;top:65px;width:984px;height:171px;box-sizing:border-box;background:#252525;border:2px solid #7a7a7a;border-radius:15px;box-shadow:0 3px 10px rgba(0,0,0,0.22);"></div>
<div style="left:792.4px;top:101.2px;width:896.6px;height:33.6px;background:#927b2d;border-radius:0px;"></div>
<div class="t" style="left:814.2px;top:108.1px;font-size:25.2px;line-height:25.2px;color:#f6e5a0;transform:scaleX(0.9942);transform-origin:left center;">Enter ISBNs, DOIs, PMIDs, arXiv IDs, or ADS Bibcodes to add to your library:</div>
<div style="left:809.5px;top:148.6px;width:866px;height:45.4px;box-sizing:border-box;background:#2d2d2d;border:1px solid #353535;border-bottom:3px solid #3f72e0;border-radius:5px;"></div>
<div style="left:815.3px;top:154.5px;width:1.8px;height:34.3px;background:#f0f0f0;border-radius:0px;"></div>
</body></html>
